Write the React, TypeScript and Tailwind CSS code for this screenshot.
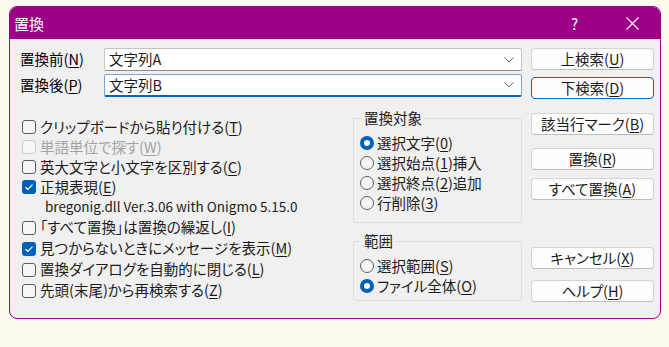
import React from "react";

const U = ({ c }: { c: string }) => <span className="underline underline-offset-[2px]">{c}</span>;

function Check({ checked, disabled, children }: { checked?: boolean; disabled?: boolean; children: React.ReactNode }) {
  return (
    <div className="flex items-center h-[20px]">
      {checked ? (
        <div className="w-[14px] h-[14px] rounded-[3px] bg-[#005fb8] flex items-center justify-center shrink-0">
          <svg width="10" height="8" viewBox="0 0 10 8">
            <path d="M1.5 4.2 L3.8 6.3 L8.5 1.6" fill="none" stroke="white" strokeWidth="1.2" />
          </svg>
        </div>
      ) : (
        <div className={`w-[14px] h-[14px] shrink-0 rounded-[3px] border bg-[#f6f6f6] ${disabled ? "border-[#cacaca]" : "border-[#5c5c5c]"}`} />
      )}
      <span className={`ml-[4px] whitespace-nowrap ${disabled ? "text-[#a3a3a3]" : "text-[#1b1b1b]"}`}>{children}</span>
    </div>
  );
}

function Radio({ checked, children }: { checked?: boolean; children: React.ReactNode }) {
  return (
    <div className="flex items-center h-[20px]">
      {checked ? (
        <div className="w-[14px] h-[14px] shrink-0 rounded-full bg-[#005fb8] flex items-center justify-center">
          <div className="w-[6px] h-[6px] rounded-full bg-white" />
        </div>
      ) : (
        <div className="w-[14px] h-[14px] shrink-0 rounded-full border border-[#5c5c5c] bg-[#f6f6f6]" />
      )}
      <span className="ml-[3px] whitespace-nowrap text-[#1b1b1b]">{children}</span>
    </div>
  );
}

function Btn({ children, focus, className = "" }: { children: React.ReactNode; focus?: boolean; className?: string }) {
  return (
    <div
      className={`h-[22px] rounded-[4px] flex items-center justify-center bg-[#fdfdfd] border whitespace-nowrap ${
        focus ? "border-[#0067c0]" : "border-[#d3d3d3] border-b-[#bdbdbd]"
      } text-[#1b1b1b] ${className}`}
    >
      {children}
    </div>
  );
}

function Combo({ value, focus }: { value: string; focus?: boolean }) {
  return (
    <div
      className={`w-[418px] h-[23px] flex items-center bg-white border rounded-[2px] ${
        focus ? "border-[#7aa7d8] border-b-[#0067c0] border-b-[2px]" : "border-[#c4c4c4] border-b-[#8a8a8a]"
      }`}
    >
      <span className="pl-[4px] flex-1 text-[#1b1b1b]">{value}</span>
      <svg width="10" height="6" viewBox="0 0 10 6" className="mr-[7px]">
        <path d="M0.5 0.5 L5 5 L9.5 0.5" fill="none" stroke="#6b6b6b" strokeWidth="1" />
      </svg>
    </div>
  );
}

function Group({ title, className = "", children }: { title: string; className?: string; children: React.ReactNode }) {
  return (
    <div className={`relative border border-[#dcdcdc] rounded-[3px] ${className}`}>
      <span className="absolute left-[8px] top-[-11px] bg-[#f0f0f0] px-[2px] leading-[20px] text-[#1b1b1b]">{title}</span>
      {children}
    </div>
  );
}

export default function App() {
  return (
    <div className="w-[669px] h-[347px] bg-[#fef9ee] pt-[6px] pl-[9px] font-['Noto_Sans_CJK_JP',sans-serif] text-[14.5px] leading-none [font-feature-settings:'palt']">
      <div className="w-[652px] h-[313px] border border-[#9c0086] rounded-[8px] overflow-hidden bg-[#f0f0f0] flex flex-col">
        <div className="h-[32px] bg-[#9c0086] flex items-center text-white shrink-0">
          <span className="ml-[4px] text-[15px]">置換</span>
          <span className="ml-auto mr-[48px] text-[15px]">?</span>
          <svg width="13" height="13" viewBox="0 0 13 13" className="mr-[21px]">
            <path d="M0.5 0.5 L12.5 12.5 M12.5 0.5 L0.5 12.5" stroke="white" strokeWidth="1.1" />
          </svg>
        </div>
        <div className="flex pt-[9px] pl-[10px]">
          <div className="w-[502px] flex flex-col">
            <div className="flex items-center">
              <span className="w-[84px]">置換前(<U c="N" />)</span>
              <Combo value="文字列A" />
            </div>
            <div className="flex items-center mt-[3px]">
              <span className="w-[84px]">置換後(<U c="P" />)</span>
              <Combo value="文字列B" focus />
            </div>
            <div className="flex mt-[20px]">
              <div className="w-[333px] pl-[2px] flex flex-col">
                <Check>クリップボードから貼り付ける(<U c="T" />)</Check>
                <Check disabled>単語単位で探す(<U c="W" />)</Check>
                <Check>英大文字と小文字を区別する(<U c="C" />)</Check>
                <Check checked>正規表現(<U c="E" />)</Check>
                <div className="h-[20px] flex items-center pl-[23px] text-[#1b1b1b] text-[13.5px] whitespace-nowrap">bregonig.dll Ver.3.06 with Onigmo 5.15.0</div>
                <div className="h-[21px] flex items-center"><Check>「すべて置換」は置換の繰返し(<U c="I" />)</Check></div>
                <div className="h-[21px] flex items-center"><Check checked>見つからないときにメッセージを表示(<U c="M" />)</Check></div>
                <div className="h-[21px] flex items-center"><Check>置換ダイアログを自動的に閉じる(<U c="L" />)</Check></div>
                <div className="h-[21px] flex items-center"><Check>先頭(末尾)から再検索する(<U c="Z" />)</Check></div>
              </div>
              <div className="w-[169px] flex flex-col pt-[1px]">
                <Group title="置換対象" className="h-[105px] pt-[14px] pl-[6px]">
                  <Radio checked>選択文字(<U c="0" />)</Radio>
                  <Radio>選択始点(<U c="1" />)挿入</Radio>
                  <Radio>選択終点(<U c="2" />)追加</Radio>
                  <Radio>行削除(<U c="3" />)</Radio>
                </Group>
                <Group title="範囲" className="mt-[18px] h-[60px] pt-[14px] pl-[6px]">
                  <Radio>選択範囲(<U c="S" />)</Radio>
                  <Radio checked>ファイル全体(<U c="O" />)</Radio>
                </Group>
              </div>
            </div>
          </div>
          <div className="w-[123px] ml-[9px] flex flex-col">
            <Btn>上検索(<U c="U" />)</Btn>
            <Btn focus className="mt-[7px]">下検索(<U c="D" />)</Btn>
            <Btn className="mt-[14px]">該当行マーク(<U c="B" />)</Btn>
            <Btn className="mt-[13px]">置換(<U c="R" />)</Btn>
            <Btn className="mt-[8px]">すべて置換(<U c="A" />)</Btn>
            <Btn className="mt-[47px]">キャンセル(<U c="X" />)</Btn>
            <Btn className="mt-[11px]">ヘルプ(<U c="H" />)</Btn>
          </div>
        </div>
      </div>
    </div>
  );
}
